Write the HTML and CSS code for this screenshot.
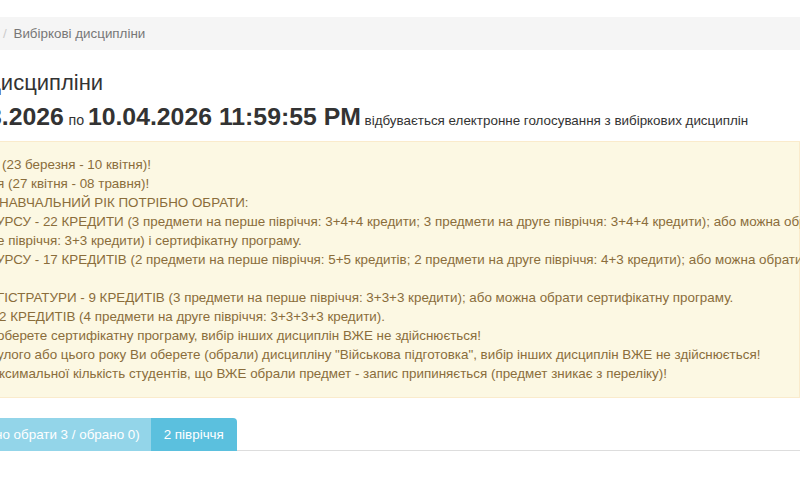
FILE: index.html
```html
<!DOCTYPE html>
<html lang="uk">
<head>
    <meta charset="UTF-8">
    <title>Вибіркові дисципліни</title>
    <link rel="stylesheet" href="styles.css">
</head>
<body>
    <div class="page">
        <!-- Breadcrumb -->
        <ol class="breadcrumb">
            <li class="active">Вибіркові дисципліни</li>
        </ol>

        <h3 class="title">дисципліни</h3>

        <p class="period">
            <b class="big">3.2026</b> <span class="by">по</span> <b class="big">10.04.2026 11:59:55 PM</b> відбувається електронне голосування з вибіркових дисциплін
        </p>

        <!-- Notice -->
        <div class="alert">
            <div class="ln ln-3">(23 березня - 10 квітня)!</div>
            <div class="ln">я (27 квітня - 08 травня)!</div>
            <div class="ln ln-7">НАВЧАЛЬНИЙ РІК ПОТРІБНО ОБРАТИ:</div>
            <div class="ln ln-m3">УРСУ - 22 КРЕДИТИ (3 предмети на перше півріччя: 3+4+4 кредити; 3 предмети на друге півріччя: 3+4+4 кредити); або можна обрати</div>
            <div class="ln">е півріччя: 3+3 кредити) і сертифікатну програму.</div>
            <div class="ln ln-m3">УРСУ - 17 КРЕДИТІВ (2 предмети на перше півріччя: 5+5 кредитів; 2 предмети на друге півріччя: 4+3 кредити); або можна обрати</div>
            <div class="ln">&nbsp;</div>
            <div class="ln">ГІСТРАТУРИ - 9 КРЕДИТІВ (3 предмети на перше півріччя: 3+3+3 кредити); або можна обрати сертифікатну програму.</div>
            <div class="ln ln-0">2 КРЕДИТІВ (4 предмети на друге півріччя: 3+3+3+3 кредити).</div>
            <div class="ln">оберете сертифікатну програму, вибір інших дисциплін ВЖЕ не здійснюється!</div>
            <div class="ln">улого або цього року Ви оберете (обрали) дисципліну "Військова підготовка", вибір інших дисциплін ВЖЕ не здійснюється!</div>
            <div class="ln ln-0">ксимальної кількість студентів, що ВЖЕ обрали предмет - запис припиняється (предмет зникає з переліку)!</div>
        </div>

        <!-- Semester tabs -->
        <ul class="tabs">
            <li class="tab tab-first">но обрати 3 / обрано 0)</li>
            <li class="tab tab-second">2 півріччя</li>
        </ul>
    </div>
</body>
</html>
```

FILE: styles.css
```css
/* General */
html, body {
    margin: 0;
    padding: 0;
    overflow: hidden;
}
body {
    font-family: "Liberation Sans", Arial, sans-serif;
    font-size: 13.4px;
    line-height: 19px;
    color: #333;
    background: #fff;
}
.page {
    padding-top: 17px;
}

/* Breadcrumb */
.breadcrumb {
    list-style: none;
    margin: 0;
    padding: 0 0 0 3px;
    height: 33px;
    line-height: 33px;
    background: #f5f5f5;
    white-space: nowrap;
}
.breadcrumb li {
    display: inline-block;
    color: #777;
}
.breadcrumb li:before {
    content: "/\00a0";
    padding-right: 3px;
    color: #ccc;
}

/* Heading */
.title {
    margin: 20px 0 0 -12px;
    font-size: 22px;
    font-weight: normal;
    line-height: 26px;
    white-space: nowrap;
}
.period {
    margin: 6px 0 0 -12px;
    line-height: 30px;
    white-space: nowrap;
}
.period .big {
    font-size: 24.8px;
}
.period .by {
    font-size: 14.2px;
    margin-left: 1px;
}

/* Alert */
.alert {
    margin: 5px 0 0 -20px;
    padding: 13px 0 14px 16px;
    background: #fcf8e3;
    border: 1px solid #faebcc;
    color: #8a6d3b;
}
.ln {
    white-space: nowrap;
}
.ln-0 { margin-left: 2px; }
.ln-3 { margin-left: 5px; }
.ln-7 { margin-left: 2px; }
.ln-m3 { margin-left: -1px; }

/* Tabs */
.tabs {
    list-style: none;
    margin: 20px 0 0;
    padding: 0;
    display: flex;
    border-bottom: 1px solid #ddd;
}
.tab {
    height: 33px;
    line-height: 33px;
    margin-bottom: -1px;
    padding: 0 13px;
    color: #fff;
    white-space: nowrap;
}
.tab-first {
    margin-left: -5px;
    padding-left: 0;
    padding-right: 11px;
    background: #93d5e9;
}
.tab-second {
    background: #5bc0de;
    border-radius: 0 4px 0 0;
}
```
